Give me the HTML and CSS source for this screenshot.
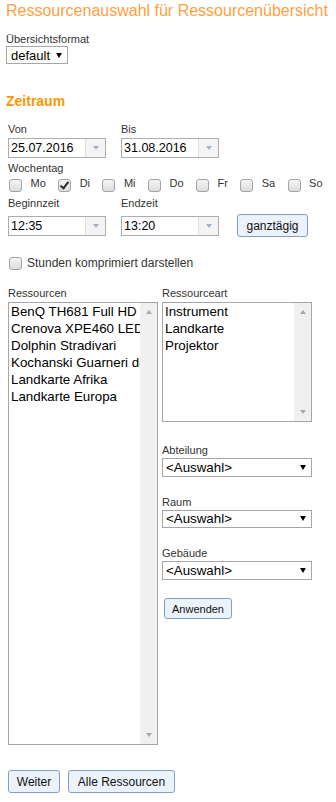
FILE: index.html
```html
<!DOCTYPE html>
<html lang="de">
<head>
  <meta charset="UTF-8">
  <title>Ressourcenauswahl für Ressourcenübersicht</title>
  <link rel="stylesheet" href="styles.css">
</head>
<body>
  <div class="page">
    <h1>Ressourcenauswahl für Ressourcenübersicht</h1>

    <div class="label format-label">Übersichtsformat</div>
    <div class="select select-format"><span>default</span><span class="caret"></span></div>

    <h2>Zeitraum</h2>
    <div class="zeitraum">
      <div class="pair top-labels">
        <div class="label">Von</div>
        <div class="label">Bis</div>
      </div>
      <div class="pair dates">
        <div class="combo"><span class="value">25.07.2016</span><span class="drop"></span></div>
        <div class="combo"><span class="value">31.08.2016</span><span class="drop"></span></div>
      </div>

      <div class="label weekday-label">Wochentag</div>
      <div class="days">
        <label class="day"><input class="check" type="checkbox"><span>Mo</span></label>
        <label class="day"><input class="check" type="checkbox" checked><span>Di</span></label>
        <label class="day"><input class="check" type="checkbox"><span>Mi</span></label>
        <label class="day"><input class="check" type="checkbox"><span>Do</span></label>
        <label class="day"><input class="check" type="checkbox"><span>Fr</span></label>
        <label class="day"><input class="check" type="checkbox"><span>Sa</span></label>
        <label class="day"><input class="check" type="checkbox"><span>So</span></label>
      </div>

      <div class="pair time-labels">
        <div class="label">Beginnzeit</div>
        <div class="label">Endzeit</div>
      </div>
      <div class="pair times">
        <div class="combo"><span class="value">12:35</span><span class="drop"></span></div>
        <div class="combo"><span class="value">13:20</span><span class="drop"></span></div>
        <button class="btn btn-allday">ganztägig</button>
      </div>

      <label class="compress"><input class="check" type="checkbox"><span>Stunden komprimiert darstellen</span></label>

      <div class="resources">
        <div class="res-col">
          <div class="label">Ressourcen</div>
          <div class="listbox list-resources">
            <div class="options">
              <div>BenQ TH681 Full HD</div>
              <div>Crenova XPE460 LED</div>
              <div>Dolphin Stradivari</div>
              <div>Kochanski Guarneri del Gesu</div>
              <div>Landkarte Afrika</div>
              <div>Landkarte Europa</div>
            </div>
            <div class="scrollbar"><span class="arrow-up"></span><span class="arrow-down"></span></div>
          </div>
        </div>

        <div class="res-col">
          <div class="label">Ressourceart</div>
          <div class="listbox list-types">
            <div class="options">
              <div>Instrument</div>
              <div>Landkarte</div>
              <div>Projektor</div>
            </div>
            <div class="scrollbar"><span class="arrow-up"></span><span class="arrow-down"></span></div>
          </div>

          <div class="label filter-label">Abteilung</div>
          <div class="select select-filter"><span>&lt;Auswahl&gt;</span><span class="caret"></span></div>

          <div class="label filter-label">Raum</div>
          <div class="select select-filter"><span>&lt;Auswahl&gt;</span><span class="caret"></span></div>

          <div class="label filter-label">Gebäude</div>
          <div class="select select-filter"><span>&lt;Auswahl&gt;</span><span class="caret"></span></div>

          <button class="btn btn-apply">Anwenden</button>
        </div>
      </div>

      <div class="footer">
        <button class="btn btn-next">Weiter</button>
        <button class="btn btn-all">Alle Ressourcen</button>
      </div>
    </div>
  </div>
</body>
</html>
```

FILE: styles.css
```css
body {
  margin: 0;
  font-family: "Liberation Sans", Arial, sans-serif;
  color: #333;
  background: #fff;
}
.page {
  padding: 2px 0 0 6px;
}
h1 {
  margin: 0;
  font-size: 16px;
  line-height: 18px;
  font-weight: normal;
  color: #ffa040;
  white-space: nowrap;
}
h2 {
  margin: 29px 0 0;
  font-size: 14px;
  line-height: 16px;
  color: #ff9600;
}
.label {
  font-size: 11px;
  line-height: 13px;
}
.format-label {
  margin-top: 13px;
}

/* selects */
.select {
  display: flex;
  align-items: center;
  justify-content: space-between;
  box-sizing: border-box;
  height: 18px;
  border: 1px solid #a6a6a6;
  background: #fff;
  font-size: 13px;
  color: #000;
  padding: 0 5px 0 4px;
}
.select-format {
  width: 62px;
}
.select-filter {
  width: 150px;
  height: 18.5px;
  margin-top: 1px;
  padding-left: 3px;
  font-size: 13.33px;
}
.caret {
  width: 0;
  height: 0;
  border-left: 3px solid transparent;
  border-right: 3px solid transparent;
  border-top: 5px solid #000;
}

/* zeitraum */
.zeitraum {
  padding-left: 2px;
}
.pair {
  display: flex;
  gap: 15px;
}
.pair > .label,
.pair > .combo {
  width: 98px;
}
.top-labels {
  margin-top: 14px;
}
.dates {
  margin-top: 2px;
}
.combo {
  display: flex;
  box-sizing: border-box;
  height: 20px;
  border: 1px solid #abadb3;
  background: #fff;
}
.combo .value {
  flex: 1;
  padding-left: 2px;
  font-size: 12.5px;
  line-height: 18px;
  color: #000;
}
.combo .drop {
  width: 19px;
  border-left: 1px solid #e0e0e0;
  background: #f4f4f4;
  display: flex;
  align-items: center;
  justify-content: center;
}
.combo .drop::after {
  content: "";
  border-left: 3.5px solid transparent;
  border-right: 3.5px solid transparent;
  border-top: 4px solid #a2b3ca;
}
.weekday-label {
  margin-top: 4px;
}
.days {
  display: flex;
  gap: 12.4px;
  margin-top: 2px;
  padding-left: 1px;
}
.day,
.compress {
  display: flex;
  align-items: flex-start;
  gap: 8.5px;
  font-size: 11px;
  line-height: 13px;
}
.check {
  appearance: none;
  position: relative;
  margin: 2px 0 0;
  width: 13px;
  height: 13px;
  border: 1px solid #a3a3a3;
  border-radius: 3px;
  background: linear-gradient(#f5f5f5, #dcdcdc);
}
.check:checked::after {
  content: "";
  position: absolute;
  left: 3px;
  top: 0;
  width: 3px;
  height: 7px;
  border: solid #2a2a2a;
  border-width: 0 2px 2px 0;
  transform: rotate(38deg);
}
.time-labels {
  margin-top: 5px;
}
.times {
  margin-top: 4px;
  align-items: center;
}
.compress {
  margin-top: 19px;
  padding-left: 1px;
  gap: 5px;
  font-size: 12px;
  line-height: 14px;
}
.compress .check {
  margin-top: 1px;
}

/* buttons */
.btn {
  box-sizing: border-box;
  height: 23px;
  border: 1px solid #7f9fc8;
  border-radius: 3px;
  background: #ebf2fa;
  font-family: inherit;
  font-size: 12px;
  color: #111;
  padding: 0;
}
.btn-allday {
  width: 71px;
  margin-left: 3px;
}
.btn-apply {
  width: 68px;
  height: 21px;
  margin: 18.5px 0 0 2px;
  font-size: 11px;
}
.btn-next {
  width: 52px;
}
.btn-all {
  width: 107px;
}

/* ressourcen */
.resources {
  display: flex;
  gap: 4px;
  margin-top: 17px;
}
.res-col {
  width: 150px;
  display: flex;
  flex-direction: column;
  align-items: flex-start;
}
.res-col .label {
  margin-bottom: 2px;
}
.listbox {
  display: flex;
  box-sizing: border-box;
  width: 150px;
  border: 1px solid #a6a6a6;
  background: #fff;
}
.list-resources {
  height: 443px;
}
.list-types {
  height: 120px;
}
.options {
  flex: 1;
  overflow: hidden;
  padding-left: 2px;
  font-size: 13.33px;
  line-height: 17px;
  color: #000;
  white-space: nowrap;
}
.scrollbar {
  width: 17px;
  background: #f0f0f0;
  display: flex;
  flex-direction: column;
  justify-content: space-between;
  align-items: center;
  padding: 7px 0 7px;
}
.arrow-up,
.arrow-down {
  width: 0;
  height: 0;
  border-left: 3.5px solid transparent;
  border-right: 3.5px solid transparent;
}
.arrow-up {
  border-bottom: 4px solid #a8a8a8;
}
.arrow-down {
  border-top: 4px solid #a8a8a8;
}
.res-col .filter-label {
  margin: 19px 0 0;
}
.res-col .filter-label:first-of-type {
  margin-top: 22px;
}
.list-types + .filter-label {
  margin-top: 22px;
}

.footer {
  display: flex;
  gap: 8px;
  margin-top: 25px;
}
```
